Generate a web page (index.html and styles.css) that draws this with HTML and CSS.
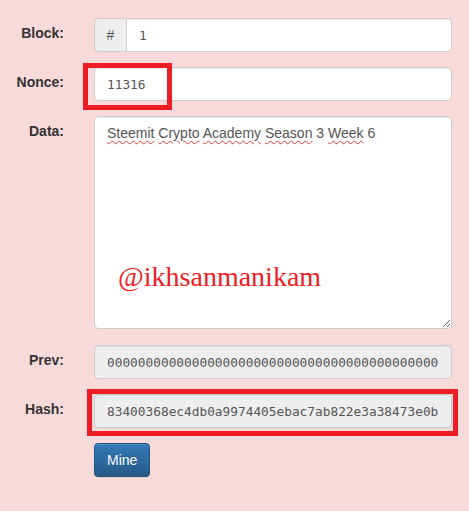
FILE: index.html
```html
<!DOCTYPE html>
<html lang="en">

<head>
    <meta charset="UTF-8">
    <title>Block</title>
    <link rel="stylesheet" href="styles.css">
</head>

<body>
    <form class="block-form">
        <div class="row">
            <label class="row-label">Block:</label>
            <div class="input-group">
                <span class="addon">#</span>
                <input class="field mono joined" type="text" value="1">
            </div>
        </div>

        <div class="row">
            <label class="row-label">Nonce:</label>
            <div class="field-wrap">
                <input class="field mono" type="text" value="11316">
                <div class="mark mark-nonce"></div>
            </div>
        </div>

        <div class="row row-data">
            <label class="row-label">Data:</label>
            <div class="field-wrap">
                <textarea class="field data" rows="10" spellcheck="false">Steemit Crypto Academy Season 3 Week 6</textarea>
                <!-- spelling marks, same text laid over the textarea -->
                <div class="spell" aria-hidden="true"><span>Steemit</span> <span>Crypto</span> <span>Academy</span> <span>Season</span> 3 <span>Week</span> 6</div>
                <!-- name written over the screenshot -->
                <div class="signature">@ikhsanmanikam</div>
            </div>
        </div>

        <div class="row">
            <label class="row-label">Prev:</label>
            <div class="field-wrap">
                <input class="field mono" type="text" disabled value="0000000000000000000000000000000000000000000000000000000000000000">
            </div>
        </div>

        <div class="row">
            <label class="row-label">Hash:</label>
            <div class="field-wrap">
                <input class="field mono" type="text" disabled value="83400368ec4db0a9974405ebac7ab822e3a38473e0b">
                <div class="mark mark-hash"></div>
            </div>
        </div>

        <div class="row">
            <span></span>
            <div>
                <button class="btn-mine" type="button">Mine</button>
            </div>
        </div>
    </form>
</body>

</html>
```

FILE: styles.css
```css
* {
    margin: 0;
    padding: 0;
    box-sizing: border-box;
}

body {
    background-color: #f9dadb;
    font-family: "Liberation Sans", Arial, sans-serif;
    font-size: 14px;
    line-height: 20px;
    color: #333;
}

.block-form {
    padding: 18px 17px 0 0;
}

.row {
    display: grid;
    grid-template-columns: 64px 1fr;
    column-gap: 30px;
    margin-bottom: 15px;
}

.row-data {
    margin-bottom: 16px;
}

.row-label {
    font-weight: bold;
    text-align: right;
    padding-top: 5px;
    color: #333;
}

.field-wrap {
    position: relative;
}

.field {
    display: block;
    width: 100%;
    height: 34px;
    padding: 6px 12px;
    font-family: "Liberation Sans", Arial, sans-serif;
    font-size: 14px;
    line-height: 20px;
    color: #555;
    background-color: #fff;
    border: 1px solid #ccc;
    border-radius: 4px;
    box-shadow: inset 0 1px 1px rgba(0,0,0,0.075);
    outline: none;
}

.field:disabled {
    background-color: #eee;
    color: #555;
    -webkit-text-fill-color: #555;
    opacity: 1;
}

.mono {
    font-family: "DejaVu Sans Mono", monospace;
    font-size: 12.8px;
}

.input-group {
    display: flex;
}

.addon {
    width: 32px;
    height: 34px;
    line-height: 32px;
    text-align: center;
    color: #555;
    background-color: #eee;
    border: 1px solid #ccc;
    border-right: 0;
    border-radius: 4px 0 0 4px;
}

.field.joined {
    flex: 1;
    border-radius: 0 4px 4px 0;
}

.data {
    height: 213px;
    resize: vertical;
}

.spell {
    position: absolute;
    left: 13px;
    top: 7px;
    font-size: 14px;
    line-height: 20px;
    color: transparent;
    pointer-events: none;
}

.spell span {
    text-decoration: underline wavy #e53935;
    text-decoration-thickness: 1px;
    text-underline-offset: 2px;
}

.signature {
    position: absolute;
    left: 24px;
    top: 144px;
    font-family: "Liberation Serif", "Times New Roman", serif;
    font-size: 28px;
    line-height: 34px;
    color: #ee1c25;
}

.mark {
    position: absolute;
    border: 5px solid #ee1c25;
}

.mark-nonce {
    left: -11px;
    top: -4px;
    width: 89px;
    height: 47px;
}

.mark-hash {
    left: -7px;
    top: -5px;
    width: 371px;
    height: 47px;
}

.btn-mine {
    height: 34px;
    padding: 6px 12px;
    font-family: "Liberation Sans", Arial, sans-serif;
    font-size: 14px;
    line-height: 20px;
    color: #fff;
    background-color: #265a88;
    background-image: linear-gradient(#337ab7, #265a88);
    border: 1px solid #245580;
    border-radius: 4px;
    text-shadow: 0 -1px 0 rgba(0,0,0,0.2);
    box-shadow: inset 0 1px 0 rgba(255,255,255,0.15), 0 1px 1px rgba(0,0,0,0.075);
    cursor: pointer;
}
```
